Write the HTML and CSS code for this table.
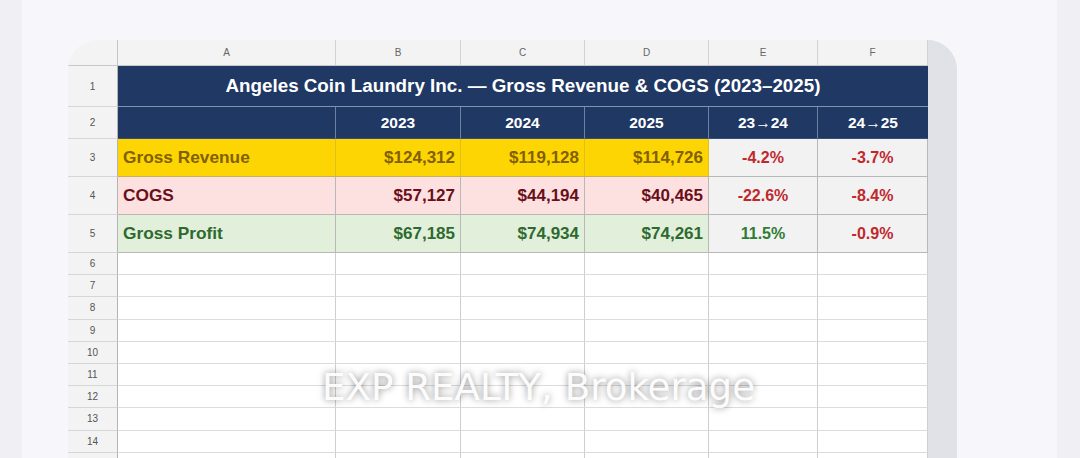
FILE: index.html
```html
<!DOCTYPE html>
<html>
<head>
<meta charset="utf-8">
<link rel="stylesheet" href="styles.css">
</head>
<body>
<div class="page">
  <div class="strip"></div>
  <main class="main">
    <div class="card">
      <div class="sheet">
        <div class="corner"></div>
        <div class="colh">A</div><div class="colh">B</div><div class="colh">C</div><div class="colh">D</div><div class="colh">E</div><div class="colh">F</div>

        <div class="rowh">1</div>
        <div class="title">Angeles Coin Laundry Inc. — Gross Revenue &amp; COGS (2023–2025)</div>

        <div class="rowh">2</div>
        <div class="hd"></div><div class="hd">2023</div><div class="hd">2024</div><div class="hd">2025</div><div class="hd">23→24</div><div class="hd last">24→25</div>

        <div class="rowh">3</div>
        <div class="c rev lbl">Gross Revenue</div><div class="c rev num">$124,312</div><div class="c rev num">$119,128</div><div class="c rev num">$114,726</div><div class="c pct neg">-4.2%</div><div class="c pct neg">-3.7%</div>

        <div class="rowh">4</div>
        <div class="c cogs lbl">COGS</div><div class="c cogs num">$57,127</div><div class="c cogs num">$44,194</div><div class="c cogs num">$40,465</div><div class="c pct neg">-22.6%</div><div class="c pct neg">-8.4%</div>

        <div class="rowh">5</div>
        <div class="c gp lbl">Gross Profit</div><div class="c gp num">$67,185</div><div class="c gp num">$74,934</div><div class="c gp num">$74,261</div><div class="c pct pos">11.5%</div><div class="c pct neg">-0.9%</div>

        <div class="rowh">6</div><div class="e"></div><div class="e"></div><div class="e"></div><div class="e"></div><div class="e"></div><div class="e"></div>
        <div class="rowh">7</div><div class="e"></div><div class="e"></div><div class="e"></div><div class="e"></div><div class="e"></div><div class="e"></div>
        <div class="rowh">8</div><div class="e"></div><div class="e"></div><div class="e"></div><div class="e"></div><div class="e"></div><div class="e"></div>
        <div class="rowh">9</div><div class="e"></div><div class="e"></div><div class="e"></div><div class="e"></div><div class="e"></div><div class="e"></div>
        <div class="rowh">10</div><div class="e"></div><div class="e"></div><div class="e"></div><div class="e"></div><div class="e"></div><div class="e"></div>
        <div class="rowh">11</div><div class="e"></div><div class="e"></div><div class="e"></div><div class="e"></div><div class="e"></div><div class="e"></div>
        <div class="rowh">12</div><div class="e"></div><div class="e"></div><div class="e"></div><div class="e"></div><div class="e"></div><div class="e"></div>
        <div class="rowh">13</div><div class="e"></div><div class="e"></div><div class="e"></div><div class="e"></div><div class="e"></div><div class="e"></div>
        <div class="rowh">14</div><div class="e"></div><div class="e"></div><div class="e"></div><div class="e"></div><div class="e"></div><div class="e"></div>
        <div class="rowh"></div><div class="e"></div><div class="e"></div><div class="e"></div><div class="e"></div><div class="e"></div><div class="e"></div>
      </div>
      <div class="gutter"></div>
    </div>
  </main>
  <div class="strip"></div>
</div>
<div class="watermark">EXP REALTY, Brokerage</div>
</body>
</html>
```

FILE: styles.css
```css
html, body {
  margin: 0;
  padding: 0;
  width: 1080px;
  height: 458px;
  overflow: hidden;
  background: #f7f7fb;
  font-family: "Liberation Sans", Arial, sans-serif;
}
.page {
  display: flex;
  height: 458px;
}
.strip {
  width: 22px;
  background: #efeff4;
  flex: none;
}
.page .strip:last-child {
  width: 23px;
}
.main {
  flex: 1;
  padding: 40px 0 0 46px;
  background: #f7f7fb;
}
.card {
  display: flex;
  width: 889px;
  border-radius: 30px 30px 0 0;
  overflow: hidden;
  background: #e1e2e7;
  height: 418px;
}
.gutter {
  flex: 1;
  background: #e1e2e7;
}
.sheet {
  display: grid;
  grid-template-columns: 50px 218px 125px 124px 124px 109px 110px;
  grid-template-rows: 26px 41px 32px 38px 38px 38px repeat(10, 22.2px);
  background: #fff;
  align-self: flex-start;
}
.sheet > div {
  box-sizing: border-box;
}
.corner {
  background: #f3f3f3;
  border-right: 1px solid #c4c4c4;
  border-bottom: 1px solid #c8c8c8;
}
.colh {
  background: #f3f3f3;
  color: #666;
  font-size: 10px;
  display: flex;
  align-items: center;
  justify-content: center;
  border-right: 1px solid #d2d2d2;
  border-bottom: 1px solid #c8c8c8;
}
.rowh {
  background: #f3f3f3;
  color: #555;
  font-size: 10px;
  display: flex;
  align-items: center;
  justify-content: center;
  border-right: 1px solid #b4b4b4;
  border-bottom: 1px solid #d6d6d6;
}
.title {
  grid-column: 2 / 8;
  background: #1f3864;
  color: #fff;
  font-weight: bold;
  font-size: 18.8px;
  display: flex;
  align-items: center;
  justify-content: center;
  border-bottom: 1px solid #8292b0;
}
.hd {
  background: #1f3864;
  color: #fff;
  font-weight: bold;
  font-size: 15.5px;
  display: flex;
  align-items: center;
  justify-content: center;
  border-right: 1px solid #6f80a2;
  border-bottom: 1px solid #3a4f78;
}
.hd.last {
  border-right: none;
}
.c {
  display: flex;
  align-items: center;
  font-weight: bold;
  border-right: 1px solid #b8b8b8;
  border-bottom: 1px solid #b8b8b8;
}
.lbl {
  font-size: 17.3px;
  padding-left: 5px;
}
.num {
  font-size: 17px;
  justify-content: flex-end;
  padding-right: 5px;
}
.pct {
  font-size: 16px;
  justify-content: center;
  background: #f2f2f2;
}
.rev {
  background: #fdd502;
  color: #806000;
  border-right-color: #e0bf20;
  border-bottom-color: #c9b060;
}
.cogs {
  background: #fde1e1;
  color: #6a0f1a;
}
.gp {
  background: #e2efda;
  color: #2d6a2f;
}
.neg {
  color: #c0282e;
}
.pos {
  color: #2e7d32;
}
.e {
  border-right: 1px solid #cfcfcf;
  border-bottom: 1px solid #dcdcdc;
}
.watermark {
  position: absolute;
  left: 322px;
  top: 369px;
  font-family: "DejaVu Sans", sans-serif;
  font-size: 37.2px;
  line-height: 37px;
  color: rgba(255, 255, 255, 0.95);
  text-shadow: 0 0 7px rgba(0, 0, 0, 0.45);
  white-space: nowrap;
}
```
